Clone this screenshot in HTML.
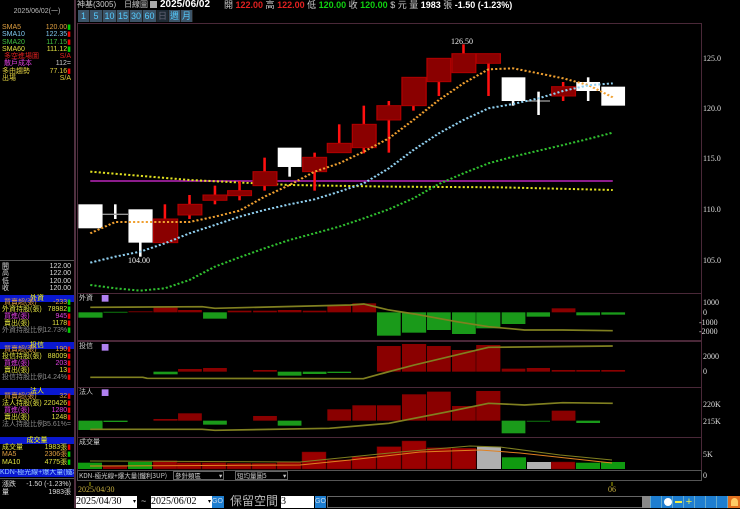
<!DOCTYPE html>
<html><head><meta charset="utf-8"><style>
*{margin:0;padding:0;box-sizing:border-box}
body{width:740px;height:508px;background:#000;overflow:hidden;position:relative;font-family:"Liberation Sans","Noto Sans CJK TC",sans-serif;font-size:8px;color:#ddd}
.a{position:absolute;white-space:nowrap}
.row{position:absolute;left:0;width:73px;height:8px;font-size:7px;line-height:8px}
.row b{font-weight:normal;position:absolute;left:2px}
.row i{font-style:normal;position:absolute;right:2px}
.hd{position:absolute;left:0;width:74px;height:7px;background:#0a18d0;color:#ff0;font-size:7px;line-height:7px;text-align:center}
.btn{position:absolute;top:10px;height:12px;background:#3c5468;color:#5cf;font-size:9px;line-height:12px;text-align:center;border-right:1px solid #222}
.ico{position:absolute;top:496px;width:11px;height:12px;background:#1e7ed0;border-left:1px solid #6ac}
</style></head><body>
<!-- left panel -->
<div class="a" style="left:74px;top:0;width:2px;height:508px;background:#503040"></div>
<div class="a" style="left:0;top:6px;width:74px;text-align:center;font-size:7px;color:#bbb">2025/06/02(一)</div>
<div class="row" style="top:24px;color:#e0a040"><b>SMA5</b><i>120.00<span style="color:#0c0">▮</span></i></div>
<div class="row" style="top:31px;color:#80c8f0"><b>SMA10</b><i>122.35<span style="color:#e00">▮</span></i></div>
<div class="row" style="top:39px;color:#40c040"><b>SMA20</b><i>117.15<span style="color:#e00">▮</span></i></div>
<div class="row" style="top:46px;color:#e0e040"><b>SMA60</b><i>111.12<span style="color:#0c0">▮</span></i></div>
<div class="row" style="top:53px;color:#e02020"><b>&nbsp;多空進場圖</b><i>S/A</i></div>
<div class="row" style="top:60px;color:#e040e0"><b>&nbsp;散戶成本</b><i style="color:#ccc">112=</i></div>
<div class="row" style="top:68px;color:#e0d040"><b>多由趨勢</b><i>77.16<span style="color:#e00">▮</span></i></div>
<div class="row" style="top:75px;color:#e0d040"><b>出場</b><i>S/A</i></div>
<div class="a" style="left:0;top:260px;width:74px;height:1px;background:#555"></div>
<div class="row" style="top:263px"><b>開</b><i>122.00</i></div>
<div class="row" style="top:270px"><b>高</b><i>122.00</i></div>
<div class="row" style="top:278px"><b>低</b><i>120.00</i></div>
<div class="row" style="top:285px"><b>收</b><i>120.00</i></div>
<div class="hd" style="top:295px">外資</div>
<div class="row" style="top:299px;color:#e0a040"><b>&nbsp;買賣超(張)</b><i>-233<span style="color:#0c0">▮</span></i></div>
<div class="row" style="top:306px;color:#e0e040"><b>外資持股(張)</b><i>78982<span style="color:#0c0">▮</span></i></div>
<div class="row" style="top:313px;color:#e040e0"><b>&nbsp;買進(張)</b><i>945<span style="color:#e00">▮</span></i></div>
<div class="row" style="top:320px;color:#e0e040"><b>&nbsp;賣出(張)</b><i>1178<span style="color:#e00">▮</span></i></div>
<div class="row" style="top:327px;color:#888"><b>外資持股比例</b><i>12.73%<span style="color:#0c0">▮</span></i></div>
<div class="hd" style="top:342px">投信</div>
<div class="row" style="top:346px;color:#e0a040"><b>&nbsp;買賣超(張)</b><i>190<span style="color:#e00">▮</span></i></div>
<div class="row" style="top:353px;color:#e0e040"><b>投信持股(張)</b><i>88009<span style="color:#e00">▮</span></i></div>
<div class="row" style="top:360px;color:#e040e0"><b>&nbsp;買進(張)</b><i>203<span style="color:#e00">▮</span></i></div>
<div class="row" style="top:367px;color:#e0e040"><b>&nbsp;賣出(張)</b><i>13<span style="color:#e00">▮</span></i></div>
<div class="row" style="top:374px;color:#888"><b>投信持股比例</b><i>14.24%<span style="color:#e00">▮</span></i></div>
<div class="hd" style="top:388px">法人</div>
<div class="row" style="top:393px;color:#e0a040"><b>&nbsp;買賣超(張)</b><i>32<span style="color:#e00">▮</span></i></div>
<div class="row" style="top:400px;color:#e0e040"><b>法人持股(張)</b><i>220426<span style="color:#e00">▮</span></i></div>
<div class="row" style="top:407px;color:#e040e0"><b>&nbsp;買進(張)</b><i>1280<span style="color:#e00">▮</span></i></div>
<div class="row" style="top:414px;color:#e0e040"><b>&nbsp;賣出(張)</b><i>1248<span style="color:#e00">▮</span></i></div>
<div class="row" style="top:421px;color:#888"><b>法人持股比例</b><i>35.61%=</i></div>
<div class="hd" style="top:437px">成交量</div>
<div class="row" style="top:444px;color:#e0e040"><b>成交量</b><i>1983張<span style="color:#e00">▮</span></i></div>
<div class="row" style="top:451px;color:#e0a040"><b>MA5</b><i>2306張<span style="color:#0c0">▮</span></i></div>
<div class="row" style="top:459px;color:#e0e040"><b>MA10</b><i>4775張<span style="color:#0c0">▮</span></i></div>
<div class="a" style="left:0;top:469px;width:74px;height:8px;background:#0a18d0;color:#9cf;font-size:7px;line-height:8px;overflow:hidden">KDN-極光線+爆大量(鐵利3U)</div>
<div class="a" style="left:0;top:478px;width:74px;height:1px;background:#555"></div>
<div class="row" style="top:481px"><b>漲跌</b><i>-1.50 (-1.23%)</i></div>
<div class="row" style="top:489px"><b>量</b><i>1983張</i></div>

<!-- top bar -->
<div class="a" style="left:77px;top:0;font-size:8px;line-height:9px;color:#ccc">神基(3005)</div>
<div class="a" style="left:124px;top:0;font-size:8px;line-height:9px;color:#ccc">日線圖</div>
<div class="a" style="left:150px;top:1px;width:7px;height:7px;background:#aaa"></div>
<div class="a" style="left:160px;top:-1px;font-size:10px;font-weight:bold;color:#fff;line-height:11px">2025/06/02</div>
<div class="a" style="left:224px;top:0;font-size:9px;line-height:10px;font-weight:bold"><span style="color:#ccc;font-weight:normal">開 </span><span style="color:#e02020">122.00</span><span style="color:#ccc;font-weight:normal"> 高 </span><span style="color:#e02020">122.00</span><span style="color:#ccc;font-weight:normal"> 低 </span><span style="color:#10d010">120.00</span><span style="color:#ccc;font-weight:normal"> 收 </span><span style="color:#10d010">120.00</span><span style="color:#ccc;font-weight:normal"> $ 元 量 </span><span style="color:#fff">1983</span><span style="color:#ccc;font-weight:normal"> 張 </span><span style="color:#fff">-1.50 (-1.23%)</span></div>
<div class="btn" style="left:78px;width:12px">1</div>
<div class="btn" style="left:90px;width:13px">5</div>
<div class="btn" style="left:103px;width:14px">10</div>
<div class="btn" style="left:117px;width:13px">15</div>
<div class="btn" style="left:130px;width:13px">30</div>
<div class="btn" style="left:143px;width:14px">60</div>
<div class="btn" style="left:157px;width:12px;background:#1e2a34;color:#667">日</div>
<div class="btn" style="left:169px;width:12px">週</div>
<div class="btn" style="left:181px;width:12px">月</div>

<svg class="a" style="left:0;top:0" width="740" height="508" xmlns="http://www.w3.org/2000/svg">
<g fill="none" stroke="#4a2838" stroke-width="1">
<rect x="77.5" y="23.5" width="624" height="270"/>
<rect x="77.5" y="293.5" width="624" height="47"/>
<rect x="77.5" y="341.5" width="624" height="46"/>
<rect x="77.5" y="387.5" width="624" height="50"/>
<rect x="77.5" y="437.5" width="624" height="43"/>
</g>
<g font-family="Liberation Serif,serif" font-size="8" fill="#ddd">
<text x="703" y="61">125.0</text><text x="703" y="111">120.0</text><text x="703" y="161">115.0</text><text x="703" y="212">110.0</text><text x="703" y="263">105.0</text>
<text x="703" y="305">1000</text><text x="703" y="315">0</text><text x="699" y="325">-1000</text><text x="699" y="334">-2000</text>
<text x="703" y="359">2000</text><text x="703" y="374">0</text>
<text x="703" y="407">220K</text><text x="703" y="424">215K</text>
<text x="703" y="457">5K</text><text x="703" y="478">0</text>
<text x="128" y="263" fill="#eee">104.00</text><text x="451" y="44" fill="#eee">126.50</text>
</g>
<!-- main chart in zoom coords -->
<g transform="translate(75,20) scale(0.4241,0.3333)">
<line x1="36" y1="483" x2="1268" y2="483" stroke="#a020a0" stroke-width="5"/>
<g fill="none" stroke-width="6" stroke-dasharray="5 5">
<polyline stroke="#e0e020" points="36,455 270,480 506,495 740,500 1000,502 1268,510"/>
<polyline stroke="#30c030" points="36,795 95,805 154,812 212,805 270,780 330,740 388,712 447,685 506,660 565,640 623,620 681,595 740,568 798,535 858,492 916,460 975,430 1033,410 1093,392 1151,375 1210,357 1268,338"/>
</g>
<g fill="#fff">
<rect x="8" y="553" width="57" height="72"/>
<rect x="92" y="553" width="6" height="44"/><rect x="65" y="581" width="60" height="4" fill="#999"/>
<rect x="151" y="660" width="6" height="50"/><rect x="126" y="568" width="57" height="100"/>
<rect x="503" y="435" width="6" height="35"/><rect x="478" y="383" width="56" height="58"/>
<rect x="1030" y="240" width="6" height="17"/><rect x="1006" y="172" width="56" height="71"/>
<rect x="1063" y="241" width="57" height="4" fill="#999"/><rect x="1090" y="215" width="6" height="70"/>
<rect x="1207" y="172" width="6" height="71"/><rect x="1182" y="186" width="56" height="27"/>
<rect x="1241" y="200" width="56" height="57"/>
</g>
<g fill="#ff1010">
<rect x="209" y="553" width="6" height="50"/><rect x="267" y="525" width="6" height="72"/>
<rect x="327" y="497" width="6" height="56"/><rect x="385" y="483" width="6" height="58"/>
<rect x="444" y="413" width="6" height="99"/><rect x="562" y="398" width="6" height="114"/>
<rect x="620" y="313" width="6" height="85"/><rect x="678" y="257" width="6" height="143"/>
<rect x="737" y="243" width="6" height="155"/><rect x="795" y="250" width="6" height="22"/>
<rect x="855" y="170" width="6" height="58"/><rect x="913" y="73" width="6" height="30"/>
<rect x="972" y="120" width="6" height="108"/><rect x="1148" y="186" width="6" height="57"/>
</g>
<g fill="#8a0000" stroke="#b00000" stroke-width="3">
<rect x="185" y="597" width="57" height="71"/><rect x="243" y="553" width="56" height="32"/>
<rect x="302" y="525" width="56" height="16"/><rect x="360" y="512" width="56" height="15"/>
<rect x="420" y="455" width="56" height="42"/><rect x="537" y="412" width="56" height="43"/>
<rect x="595" y="370" width="56" height="28"/><rect x="654" y="313" width="56" height="70"/>
<rect x="712" y="257" width="56" height="43"/><rect x="771" y="172" width="57" height="85"/>
<rect x="830" y="115" width="56" height="70"/><rect x="889" y="101" width="56" height="57"/>
<rect x="946" y="101" width="57" height="29"/><rect x="1124" y="200" width="56" height="28"/>
</g>
<g fill="none" stroke-width="6" stroke-dasharray="5 5">
<polyline stroke="#f0a030" points="36,640 95,606 154,606 212,606 270,606 330,590 388,572 447,530 506,495 565,455 623,430 681,395 740,355 798,300 858,240 916,190 975,148 1033,145 1093,160 1151,175 1210,195 1268,232"/>
<polyline stroke="#90d0f0" points="36,728 95,710 154,695 212,670 270,640 330,615 388,590 447,570 506,553 565,538 623,515 681,490 740,445 798,390 858,340 916,300 975,265 1033,252 1093,235 1151,213 1210,196 1268,190"/>
</g>
</g>
<!-- panels in zoom coords -->
<g transform="translate(75,290) scale(0.4241,0.3333)">
<g fill="#1a9a1a">
<rect x="8" y="67" width="57" height="16"/><rect x="67" y="65" width="57" height="4" fill="#0a5a0a"/>
<rect x="302" y="67" width="56" height="19"/><rect x="712" y="67" width="56" height="70"/>
<rect x="771" y="67" width="57" height="61"/><rect x="830" y="67" width="56" height="53"/>
<rect x="889" y="67" width="56" height="65"/><rect x="946" y="67" width="57" height="48"/>
<rect x="1006" y="67" width="56" height="35"/><rect x="1065" y="67" width="55" height="13"/>
<rect x="1182" y="67" width="56" height="9"/><rect x="1241" y="67" width="56" height="7"/>
<rect x="185" y="245" width="57" height="8"/><rect x="478" y="245" width="56" height="12"/>
<rect x="537" y="245" width="56" height="7"/><rect x="595" y="245" width="56" height="4"/>
<rect x="8" y="392" width="57" height="28"/><rect x="67" y="392" width="57" height="4"/>
<rect x="302" y="392" width="56" height="12"/><rect x="478" y="392" width="56" height="15"/>
<rect x="1006" y="392" width="56" height="38"/><rect x="1065" y="392" width="55" height="4" fill="#0a5a0a"/>
<rect x="1182" y="392" width="56" height="7"/>
</g>
<g fill="#8a0000">
<rect x="126" y="63" width="57" height="4" fill="#5a0000"/><rect x="185" y="50" width="57" height="17"/>
<rect x="243" y="60" width="56" height="7"/><rect x="360" y="62" width="56" height="5"/>
<rect x="420" y="62" width="56" height="5"/><rect x="478" y="60" width="56" height="7"/>
<rect x="537" y="62" width="56" height="5"/><rect x="595" y="45" width="56" height="22"/>
<rect x="654" y="40" width="56" height="27"/><rect x="1124" y="55" width="56" height="12"/>
<rect x="243" y="237" width="56" height="8"/><rect x="302" y="234" width="56" height="11"/>
<rect x="420" y="240" width="56" height="5"/><rect x="712" y="168" width="56" height="77"/>
<rect x="771" y="162" width="57" height="83"/><rect x="830" y="168" width="56" height="77"/>
<rect x="889" y="180" width="56" height="65"/><rect x="946" y="165" width="57" height="80"/>
<rect x="1006" y="236" width="56" height="9"/><rect x="1065" y="234" width="55" height="11"/>
<rect x="1124" y="240" width="56" height="5"/><rect x="1182" y="240" width="56" height="5"/><rect x="1241" y="240" width="56" height="5"/>
<rect x="185" y="387" width="57" height="5"/><rect x="243" y="370" width="56" height="22"/>
<rect x="420" y="378" width="56" height="14"/><rect x="595" y="358" width="56" height="34"/>
<rect x="654" y="346" width="56" height="46"/><rect x="712" y="346" width="56" height="46"/>
<rect x="771" y="313" width="57" height="79"/><rect x="830" y="305" width="56" height="87"/>
<rect x="889" y="348" width="56" height="44"/><rect x="946" y="303" width="57" height="89"/>
<rect x="1124" y="362" width="56" height="30"/>
</g>
<g fill="none" stroke="#808020" stroke-width="5">
<polyline points="36,52 300,50 330,55 650,45 681,42 740,60 800,72 900,95 975,110 1060,120 1150,120 1268,122"/>
<polyline points="36,262 160,262 170,265 680,266 740,245 800,225 975,172 1268,168"/>
<polyline points="36,418 300,418 330,421 600,415 740,400 800,385 880,365 975,340 1060,345 1150,338 1268,340"/>
</g>
<g fill="#b080f0"><rect x="63" y="15" width="16" height="20"/><rect x="63" y="162" width="16" height="20"/><rect x="63" y="298" width="16" height="20"/></g>
<g font-size="22" fill="#ccc" font-family="Noto Sans CJK TC,sans-serif" transform="scale(1,1.3)">
</g>
</g>
<g font-size="7" fill="#ccc" font-family="Noto Sans CJK TC,sans-serif">
<text x="79" y="300">外資</text><text x="79" y="348">投信</text><text x="79" y="394">法人</text><text x="79" y="444">成交量</text>
</g>
<!-- volume -->
<g>
<rect x="78" y="462.7" width="24" height="6.3" fill="#109a10"/>
<rect x="103" y="466" width="24" height="3" fill="#8a0000"/>
<rect x="128" y="462" width="24" height="7" fill="#109a10"/>
<g fill="#9a0000" stroke="#600" stroke-width=".5">
<rect x="153" y="460.7" width="24" height="8.3"/><rect x="177" y="462.7" width="24" height="6.3"/>
<rect x="202" y="462.7" width="24" height="6.3"/><rect x="227" y="463.3" width="24" height="5.7"/>
<rect x="252" y="463.3" width="24" height="5.7"/><rect x="277" y="462" width="24" height="7"/>
<rect x="302" y="452" width="24" height="17"/><rect x="327" y="460" width="24" height="9"/>
<rect x="352" y="456.7" width="24" height="12.3"/><rect x="377" y="446.7" width="24" height="22.3"/>
<rect x="402" y="441" width="24" height="28"/><rect x="427" y="447.7" width="24" height="21.3"/>
<rect x="452" y="448.3" width="24" height="20.7"/><rect x="551" y="462" width="24" height="7"/>
</g>
<rect x="477" y="446.7" width="24" height="22.3" fill="#b0b0b0"/>
<rect x="502" y="457.3" width="24" height="11.7" fill="#109a10"/>
<rect x="527" y="462" width="24" height="7" fill="#b0b0b0"/>
<rect x="576" y="462.7" width="24" height="6.3" fill="#109a10"/>
<rect x="601" y="462" width="24" height="7" fill="#109a10"/>
<polyline fill="none" stroke="#808020" stroke-width="1" points="90,461 300,462 400,452 470,446 500,447 560,455 612,460"/>
<polyline fill="none" stroke="#e08020" stroke-width="1" points="90,466 300,465 350,460 420,452 480,450 520,453 612,463"/>
</g>
<rect x="77.5" y="470.5" width="624" height="10" fill="#000" stroke="#555"/>
<g font-size="6.5" fill="#ccc" font-family="Noto Sans CJK TC,sans-serif">
<text x="79" y="478">KDN-極光線+爆大量(鐵利3UP)</text>
<rect x="173.5" y="471.5" width="50" height="8" fill="none" stroke="#666"/><text x="175" y="478">參針類區</text><text x="219" y="478">▾</text>
<rect x="235.5" y="471.5" width="52" height="8" fill="none" stroke="#666"/><text x="237" y="478">短均量圖5</text><text x="283" y="478">▾</text>
</g>
<line x1="90" y1="482" x2="90" y2="486" stroke="#aa0"/><line x1="612" y1="482" x2="612" y2="486" stroke="#aa0"/>
<text x="78" y="492" font-size="8" fill="#c8b040" font-family="Liberation Serif,serif">2025/04/30</text>
<text x="608" y="492" font-size="8" fill="#c8b040" font-family="Liberation Serif,serif">06</text>
</svg>

<!-- bottom controls -->
<div class="a" style="left:76px;top:496px;width:61px;height:12px;background:#fff;color:#000;font-size:10px;line-height:12px;font-family:'Liberation Serif',serif">2025/04/30<span style="position:absolute;right:1px;font-size:6px">▾</span></div>
<div class="a" style="left:141px;top:496px;color:#ccc;font-size:9px">~</div>
<div class="a" style="left:151px;top:496px;width:61px;height:12px;background:#fff;color:#000;font-size:10px;line-height:12px;font-family:'Liberation Serif',serif">2025/06/02<span style="position:absolute;right:1px;font-size:6px">▾</span></div>
<div class="a" style="left:212px;top:496px;width:12px;height:12px;background:#1e7ed0;color:#cde;font-size:7px;line-height:12px">GO</div>
<div class="a" style="left:230px;top:494px;color:#bbb;font-size:12px;line-height:14px;font-family:'Noto Sans CJK TC',sans-serif">保留空間</div>
<div class="a" style="left:281px;top:496px;width:33px;height:12px;background:#fff;color:#000;font-size:10px;line-height:12px;font-family:'Liberation Serif',serif">3</div>
<div class="a" style="left:315px;top:496px;width:11px;height:12px;background:#1e7ed0;color:#cde;font-size:7px;line-height:12px">GO</div>
<div class="a" style="left:327px;top:496px;width:320px;height:12px;background:#000;border:1px solid #666"></div>
<div class="a" style="left:642px;top:496px;width:8px;height:12px;background:#888"></div>
<div class="ico" style="left:650px"></div><div class="ico" style="left:661px"><div style="margin:2px;width:8px;height:8px;border-radius:50%;background:#fff"></div></div>
<div class="ico" style="left:672px"><div style="margin:5px 2px;width:7px;height:2px;background:#ee4"></div></div>
<div class="ico" style="left:683px;color:#ee4;font-size:11px;line-height:12px;text-align:center">+</div>
<div class="ico" style="left:694px"></div><div class="ico" style="left:705px"></div><div class="ico" style="left:716px"></div>
<div class="ico" style="left:727px;width:13px;background:#e07020"><div style="margin:2px 3px;width:7px;height:8px;border-radius:4px 4px 0 0;background:#fc6"></div></div>
</body></html>
